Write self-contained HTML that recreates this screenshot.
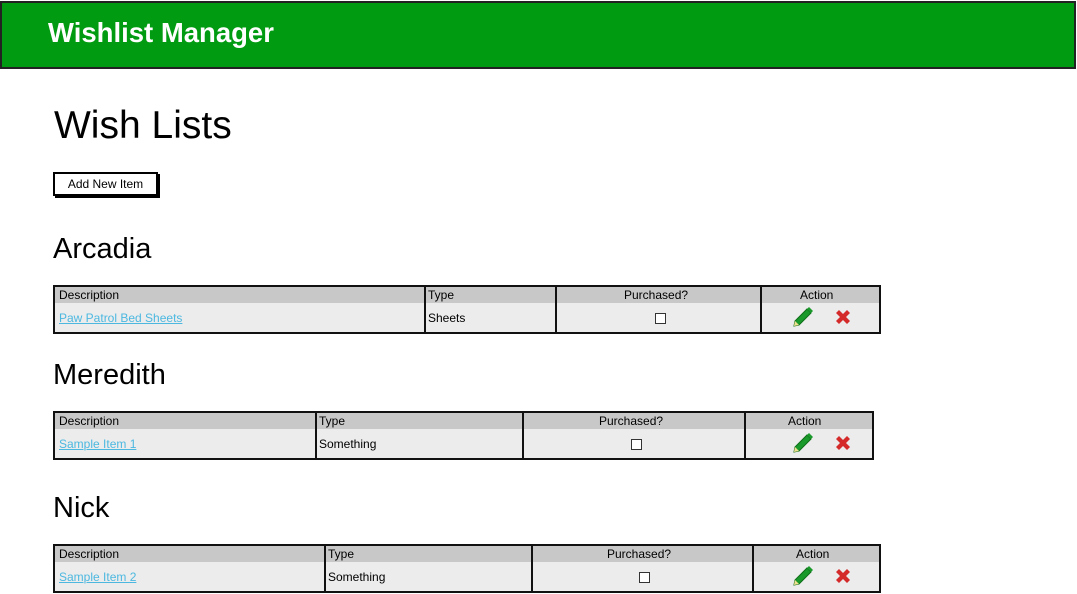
<!DOCTYPE html>
<html><head><meta charset="utf-8"><style>
*{margin:0;padding:0;box-sizing:border-box}
body{width:1077px;height:594px;background:#fff;position:relative;overflow:hidden;font-family:"Liberation Sans",sans-serif;color:#000}
.hdr{position:absolute;left:0;top:1px;width:1076px;height:68px;background:#009b10;border:2px solid #222}
.hdr span{position:absolute;left:46px;top:14px;color:#fff;font-weight:bold;font-size:27.5px}
.h1{position:absolute;left:54px;top:104px;font-size:39px}
.btn{position:absolute;left:53px;top:172px;width:105px;height:24px;border:2px solid #000;box-shadow:2px 2px 0 #000;font-size:12px;text-align:center;line-height:20px;background:#fff}
.h2{position:absolute;left:53px;font-size:29px}
.tbl{position:absolute;left:53px;height:49px;border:2px solid #111;background:#ececec}
.tbl .hd{position:absolute;left:0;top:0;right:0;height:16px;background:#c8c8c8}
.c{position:absolute;top:0;bottom:0;border-left:2px solid #111}
.t{position:absolute;font-size:12px;white-space:nowrap}
.lnk{color:#4cb8e0;text-decoration:underline}
.cb{position:absolute;width:11px;height:11px;border:1px solid #333;background:#fff}
svg{position:absolute}
</style></head><body>
<div class="hdr"><span>Wishlist Manager</span></div>
<div class="h1">Wish Lists</div>
<div class="btn">Add New Item</div>

<div class="h2" style="top:233px">Arcadia</div>
<div class="tbl" style="top:285px;width:828px">
<div class="hd"></div>
<div class="c" style="left:369px"></div><div class="c" style="left:500px"></div><div class="c" style="left:705px"></div>
<div class="t" style="left:4px;top:1px">Description</div>
<div class="t lnk" style="left:4px;top:24px">Paw Patrol Bed Sheets</div>
<div class="t" style="left:373px;top:1px">Type</div>
<div class="t" style="left:373px;top:24px">Sheets</div>
<div class="t" style="left:569px;top:1px">Purchased?</div>
<div class="cb" style="left:600px;top:26px"></div>
<div class="t" style="left:745px;top:1px">Action</div>
</div>

<div class="h2" style="top:359px">Meredith</div>
<div class="tbl" style="top:411px;width:821px">
<div class="hd"></div>
<div class="c" style="left:260px"></div><div class="c" style="left:467px"></div><div class="c" style="left:689px"></div>
<div class="t" style="left:4px;top:1px">Description</div>
<div class="t lnk" style="left:4px;top:24px">Sample Item 1</div>
<div class="t" style="left:264px;top:1px">Type</div>
<div class="t" style="left:264px;top:24px">Something</div>
<div class="t" style="left:544px;top:1px">Purchased?</div>
<div class="cb" style="left:576px;top:26px"></div>
<div class="t" style="left:733px;top:1px">Action</div>
</div>

<div class="h2" style="top:492px">Nick</div>
<div class="tbl" style="top:544px;width:828px">
<div class="hd"></div>
<div class="c" style="left:269px"></div><div class="c" style="left:476px"></div><div class="c" style="left:697px"></div>
<div class="t" style="left:4px;top:1px">Description</div>
<div class="t lnk" style="left:4px;top:24px">Sample Item 2</div>
<div class="t" style="left:273px;top:1px">Type</div>
<div class="t" style="left:273px;top:24px">Something</div>
<div class="t" style="left:552px;top:1px">Purchased?</div>
<div class="cb" style="left:584px;top:26px"></div>
<div class="t" style="left:741px;top:1px">Action</div>
</div>

<svg width="0" height="0"><defs>
<g id="pen"><path d="M2 20 L3 15 L15 3 L19 7 L7 19 Z" fill="#1a9a2a" stroke="#0e6e18" stroke-width="1"/><path d="M2 20 L3 15 L7 19 Z" fill="#f0e090"/><path d="M15 3 L17 1 L21 5 L19 7 Z" fill="#1a9a2a"/></g>
<g id="x"><path d="M3 6 L6 3 L10 7 L14 3 L17 6 L13 10 L17 14 L14 17 L10 13 L6 17 L3 14 L7 10 Z" fill="#d42a2a"/></g>
</defs></svg>
<svg style="left:792px;top:306px" width="22" height="22"><use href="#pen"/></svg>
<svg style="left:833px;top:307px" width="20" height="20"><use href="#x"/></svg>
<svg style="left:792px;top:432px" width="22" height="22"><use href="#pen"/></svg>
<svg style="left:833px;top:433px" width="20" height="20"><use href="#x"/></svg>
<svg style="left:792px;top:565px" width="22" height="22"><use href="#pen"/></svg>
<svg style="left:833px;top:566px" width="20" height="20"><use href="#x"/></svg>
</body></html>
